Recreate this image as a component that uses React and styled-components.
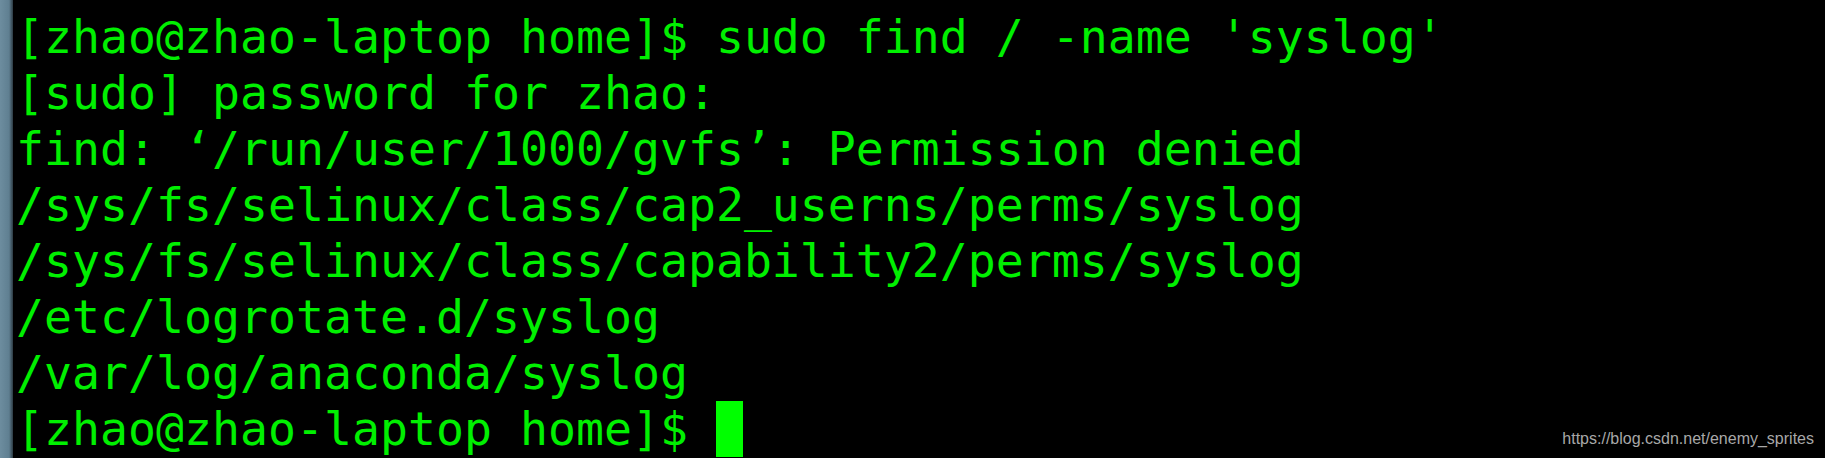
import { styled, createGlobalStyle } from 'styled-components';

const GlobalStyle = createGlobalStyle`
    html, body {
        margin: 0;
        padding: 0;
        background: #000;
    }
`;

const Screen = styled.div`
    position: relative;
    display: flex;
    flex-direction: row;
    width: 1825px;
    height: 458px;
    overflow: hidden;
    background-color: #000;
`;

const Edge = styled.div`
    width: 13px;
    flex-shrink: 0;
    background: linear-gradient(to right, #6d8d9f 0%, #5f7f91 70%, #2c3a42 100%);
`;

const Terminal = styled.div`
    flex: 1;
    padding: 9px 0 0 3px;
    font-family: "DejaVu Sans Mono", "Liberation Mono", monospace;
    font-size: 46.5px;
    line-height: 56px;
    color: #00f000;
    white-space: pre;
`;

const Line = styled.div`
    display: flex;
    align-items: center;
    height: 56px;
`;

const Cursor = styled.span`
    display: inline-block;
    width: 27px;
    height: 56px;
    background-color: #00ff00;
`;

const Watermark = styled.span`
    position: absolute;
    right: 11px;
    bottom: 10px;
    font-family: "Liberation Sans", Arial, sans-serif;
    font-size: 16px;
    color: #a8a8a8;
`;

const lines = [
    "[zhao@zhao-laptop home]$ sudo find / -name 'syslog'",
    "[sudo] password for zhao:",
    "find: \u2018/run/user/1000/gvfs\u2019: Permission denied",
    "/sys/fs/selinux/class/cap2_userns/perms/syslog",
    "/sys/fs/selinux/class/capability2/perms/syslog",
    "/etc/logrotate.d/syslog",
    "/var/log/anaconda/syslog",
];

export default function App() {
    return (
        <>
            <GlobalStyle />
            <Screen>
                <Edge />
                <Terminal>
                    {lines.map((text, i) => (
                        <Line key={i}>{text}</Line>
                    ))}
                    <Line>
                        {"[zhao@zhao-laptop home]$ "}
                        <Cursor />
                    </Line>
                </Terminal>
                <Watermark>https://blog.csdn.net/enemy_sprites</Watermark>
            </Screen>
        </>
    );
}
